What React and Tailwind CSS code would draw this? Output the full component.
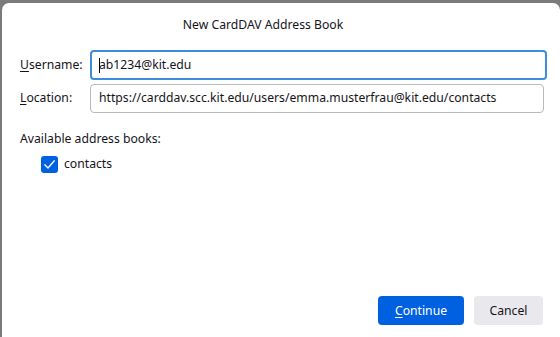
export default function App() {
  return (
    <div className="w-[560px] h-[337px] bg-[#7b7b7b] pt-[3px] pl-[2px] overflow-hidden" style={{ fontFamily: '"Noto Sans", "Open Sans", sans-serif' }}>
      <div className="h-full bg-white rounded-tl-[7px] rounded-tr-[7px] flex flex-col text-[12.2px] text-[#15141a]">
        <div className="h-[43px] flex items-center justify-center pt-[2px] pr-[36px]">New CardDAV Address Book</div>
        <div className="flex items-center mt-[4px] pl-[18px] pr-[13px]">
          <div className="w-[70px]"><span className="underline underline-offset-2">U</span>sername:</div>
          <div className="flex-1 h-[30px] border-2 border-[#3c8ddb] rounded-[4px] flex items-center px-[7px]">
            <span className="inline-block w-px h-[15px] bg-black -mr-px"></span>ab1234@kit.edu
          </div>
        </div>
        <div className="flex items-center mt-[4px] pl-[18px] pr-[16px]">
          <div className="w-[70px]"><span className="underline underline-offset-2">L</span>ocation:</div>
          <div className="flex-1 h-[29px] border border-[#b9b9bd] rounded-[4px] flex items-center px-[8px] whitespace-nowrap overflow-hidden">
            https://carddav.scc.kit.edu/users/emma.musterfrau@kit.edu/contacts
          </div>
        </div>
        <div className="pl-[18px] mt-[17px]">Available address books:</div>
        <div className="flex items-center pl-[39px] mt-[7px] gap-[6px]">
          <div className="w-[17px] h-[17px] rounded-[3px] bg-[#0061e0] flex items-center justify-center">
            <svg width="13" height="13" viewBox="0 0 13 13" fill="none">
              <path d="M1.8 6.8 L5 10 L11.3 2.8" stroke="white" strokeWidth="1.3" strokeLinecap="round" strokeLinejoin="round" />
            </svg>
          </div>
          <span>contacts</span>
        </div>
        <div className="flex-1"></div>
        <div className="flex justify-end gap-[10px] pr-[17px] pb-[12px]">
          <button className="w-[86px] h-[29px] rounded-[4px] bg-[#0061e0] text-white pt-[2px]">
            <span className="underline underline-offset-2">C</span>ontinue
          </button>
          <button className="w-[69px] h-[29px] rounded-[4px] bg-[#e9e9ed] text-[#15141a] pt-[2px]">Cancel</button>
        </div>
      </div>
    </div>
  );
}
